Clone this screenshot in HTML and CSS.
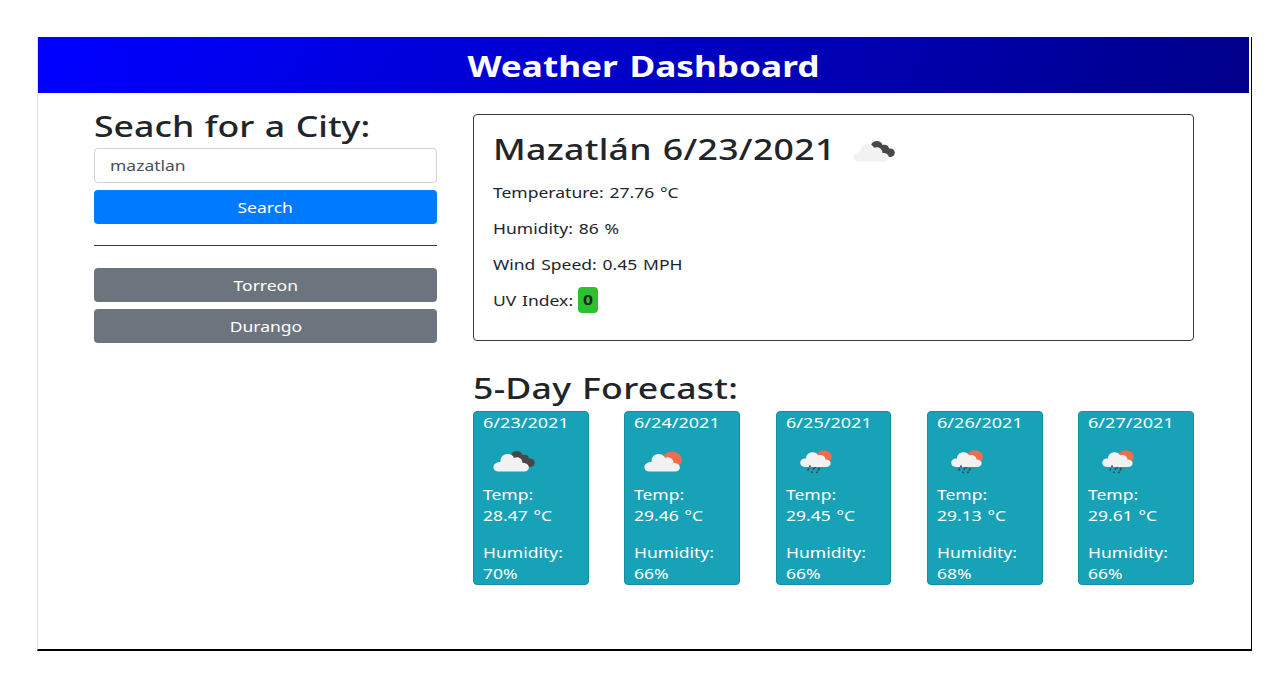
FILE: index.html
```html
<!DOCTYPE html>
<html lang="en">
<head>
<meta charset="utf-8">
<title>Weather Dashboard</title>
<link rel="stylesheet" href="styles.css">
</head>
<body>
<svg class="defs" width="0" height="0">
  <symbol id="broken" viewBox="0 0 42 21">
    <path d="M18 4.500C19-1 28-1.500 29.500 4 33 3 36 5 36 7.500c4-.5 6 2 5.800 4.500C41.500 16 36 17.500 32 14Z" fill="#484848"/>
    <path d="M5 20.500C-1.500 20.500-1.500 11 7.500 11 7 1.500 19 1 21 7 25 5 29.500 7.500 29.500 12 37.500 11.500 38 20.500 31 20.500Z" fill="currentColor"/>
  </symbol>
  <symbol id="sunny" viewBox="0 0 42 21">
    <ellipse cx="28" cy="9" rx="10.300" ry="8.300" fill="#ec6e4c"/>
    <path d="M5 20.500C-1.500 20.500-1.500 11 7.500 11 7 1.500 19 1 21 7 25 5 29.500 7.500 29.500 12 37.500 11.500 38 20.500 31 20.500Z" fill="currentColor"/>
  </symbol>
  <symbol id="rain" viewBox="0 0 32 24">
    <ellipse cx="24" cy="6.800" rx="7.900" ry="6.600" fill="#ec6e4c"/>
    <path d="M5 17C-1.500 17-1.500 8 6 8.500 6 1 16.500.5 18 5.500 21.500 4 25.500 6 25.500 9.500 32.500 9.500 32 17 26 17Z" fill="currentColor"/>
    <path d="M10.500 15.500l-1 1.500M9 18.500l-1.500 2M13.800 18l-1 2M12.500 21.500l-1 1.500M15.500 17l-.8 1.500M19.500 18l-1.500 2.500M17.500 21.500l-1 1.500" stroke="#35484c" stroke-width="1.500" fill="none"/>
  </symbol>
</svg>
<div class="frame">
  <header class="header"><h1 class="title">Weather Dashboard</h1></header>
  <main class="main">
    <aside class="side">
      <h2 class="heading h-search">Seach for a City:</h2>
      <div class="input"><span class="t">mazatlan</span></div>
      <div class="btn primary"><span class="t">Search</span></div>
      <div class="rule"></div>
      <div class="btn"><span class="t">Torreon</span></div>
      <div class="btn"><span class="t">Durango</span></div>
    </aside>
    <section class="content">
      <div class="current">
        <div class="current-head"><h2 class="heading h-city">Mazatlán 6/23/2021</h2><svg class="icon-now"><use href="#broken"/></svg></div>
        <p><span class="t">Temperature: 27.76 °C</span></p>
        <p><span class="t">Humidity: 86 %</span></p>
        <p><span class="t">Wind Speed: 0.45 MPH</span></p>
        <p class="uv"><span class="t">UV Index:</span><b class="badge"><span class="t">0</span></b></p>
      </div>
      <h2 class="heading h-forecast">5-Day Forecast:</h2>
      <div class="days">
        <div class="day"><span class="t date">6/23/2021</span><svg class="icon"><use href="#broken"/></svg><span class="t">Temp:<br>28.47 °C</span><span class="t hum">Humidity:<br>70%</span></div>
        <div class="day"><span class="t date">6/24/2021</span><svg class="icon"><use href="#sunny"/></svg><span class="t">Temp:<br>29.46 °C</span><span class="t hum">Humidity:<br>66%</span></div>
        <div class="day"><span class="t date">6/25/2021</span><svg class="icon wet"><use href="#rain"/></svg><span class="t">Temp:<br>29.45 °C</span><span class="t hum">Humidity:<br>66%</span></div>
        <div class="day"><span class="t date">6/26/2021</span><svg class="icon wet"><use href="#rain"/></svg><span class="t">Temp:<br>29.13 °C</span><span class="t hum">Humidity:<br>68%</span></div>
        <div class="day"><span class="t date">6/27/2021</span><svg class="icon wet"><use href="#rain"/></svg><span class="t">Temp:<br>29.61 °C</span><span class="t hum">Humidity:<br>66%</span></div>
      </div>
    </section>
  </main>
</div>
</body>
</html>
```
FILE: styles.css
```css
* { box-sizing: border-box; }
body { margin: 0; padding: 37px 29px 0 37px; background: #fff; color: #212529; font: 14px/21.6px "Noto Sans", "Open Sans", sans-serif; }
.defs { display: block; position: absolute; }
h1, h2, p { margin: 0; }
.frame { height: 614px; border-left: 1px solid #dedede; border-right: 1px solid #000; border-bottom: 2px solid #000; padding-right: 2px; }
.header { height: 56px; display: flex; justify-content: center; align-items: center; padding-top: 2px; background: linear-gradient(120deg, #00f 3%, #00008b 98%); }
.title { font-size: 28.500px; line-height: 36px; font-weight: 700; color: #fff; white-space: nowrap; transform: scaleX(1.235); word-spacing: 2px; }
.main { display: flex; gap: 36px; padding: 21px 55px 0 56px; }
.side { width: 343px; flex: none; }
.content { flex: 1; }
.heading { font-size: 28.500px; line-height: 34px; font-weight: 500; white-space: nowrap; width: max-content; transform: scaleX(1.25); transform-origin: left; letter-spacing: .2px; word-spacing: 1px; }
.h-search { margin-top: -5px; margin-bottom: 5px; letter-spacing: 0; }
.t { display: block; width: max-content; white-space: nowrap; transform: scaleX(1.25); transform-origin: left; word-spacing: 1px; }
.input { height: 35px; border: 1px solid #ced4da; border-radius: 4px; padding: 6px 15px; color: #495057; margin-bottom: 7px; }
.btn { height: 34px; border-radius: 4px; background: #6c757d; color: #fff; display: flex; justify-content: center; align-items: center; padding-top: 1px; margin-bottom: 7px; }
.btn .t { transform-origin: center; }
.primary { background: #007bff; }
.rule { height: 1px; background: #343a40; margin: 21px 0 22px; }
.current { height: 227px; border: 1px solid #343a40; border-radius: 4px; padding: 17px 19px; }
.current-head { display: flex; height: 34px; margin-bottom: 16px; }
.h-city { width: 360px; letter-spacing: .25px; }
.icon-now { width: 42px; height: 21px; margin-top: 9px; color: #f2f2f2; }
.current p { height: 21.600px; margin-bottom: 14.400px; }
.uv { display: flex; align-items: center; }
.uv > .t { width: 85px; }
.badge { width: 20px; height: 26px; margin-top: -1px; border-radius: 4px; background: #2dc22d; display: flex; align-items: center; justify-content: center; }
.badge .t { transform-origin: center; }
.h-forecast { margin: 30px 0 6px; }
.days { display: flex; justify-content: space-between; }
.day { width: 115.700px; height: 174px; border: 1px solid #148ea1; border-radius: 4px; background: #17a2b8; color: #fff; padding: 0 9px; }
.date { transform: scaleX(1.29); }
.icon { display: block; width: 42px; height: 21px; margin: 17px 0 12px 10px; color: #f2f2f2; }
.wet { width: 32px; height: 24px; margin: 16px 0 10px 14px; }
.hum { margin-top: 15px; }
```
